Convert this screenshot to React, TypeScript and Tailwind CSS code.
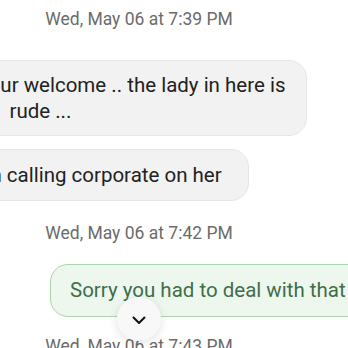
import React from "react";

function Stamp({ text }: { text: string }) {
  return (
    <div className="pr-[70px] text-center text-[17.5px] leading-6 text-[#6b6b6b]">{text}</div>
  );
}

export default function App() {
  return (
    <div className="relative w-[348px] h-[348px] overflow-hidden bg-white font-['Roboto',sans-serif]">
      <div className="flex flex-col pt-[7px]">
        <Stamp text="Wed, May 06 at 7:39 PM" />

        {/* incoming */}
        <div className="mt-[29px] ml-[-42px] w-[349px] rounded-[18px] border border-[#e6e6e6] bg-[#f2f2f2] pl-[18px] py-[11px] text-[20.5px] leading-[26px] text-[#222] whitespace-nowrap">
          Your welcome .. the lady in here is
          <br />
          so&nbsp; rude ...
        </div>
        <div className="mt-[13px] ml-[-63px] self-start rounded-[18px] border border-[#e6e6e6] bg-[#f2f2f2] pl-[18px] pr-[26px] py-3 text-[20.5px] leading-[26px] text-[#222] whitespace-nowrap">
          Then calling corporate on her
        </div>

        <div className="mt-5">
          <Stamp text="Wed, May 06 at 7:42 PM" />
        </div>

        {/* outgoing */}
        <div className="mt-[19px] ml-[50px] w-[340px] rounded-[18px] border border-[#a9d3ac] bg-[#eef7ee] pl-[19px] py-[12px] text-[20.5px] leading-[27px] text-[#3f6e4a] whitespace-nowrap">
          Sorry you had to deal with that
        </div>

        <div className="mt-[17px]">
          <Stamp text="Wed, May 06 at 7:43 PM" />
        </div>
      </div>

      {/* scroll down button */}
      <div className="absolute left-[117px] top-[297px] flex h-[44px] w-[44px] items-center justify-center rounded-full bg-[#f8f8f8] shadow-[0_2px_10px_rgba(0,0,0,0.12)]">
        <svg width="14" height="9" viewBox="0 0 14 9" className="mt-[2px]">
          <path d="M1.5 1.5 L7 7 L12.5 1.5" fill="none" stroke="#111" strokeWidth="2" strokeLinecap="round" strokeLinejoin="round" />
        </svg>
      </div>
    </div>
  );
}
